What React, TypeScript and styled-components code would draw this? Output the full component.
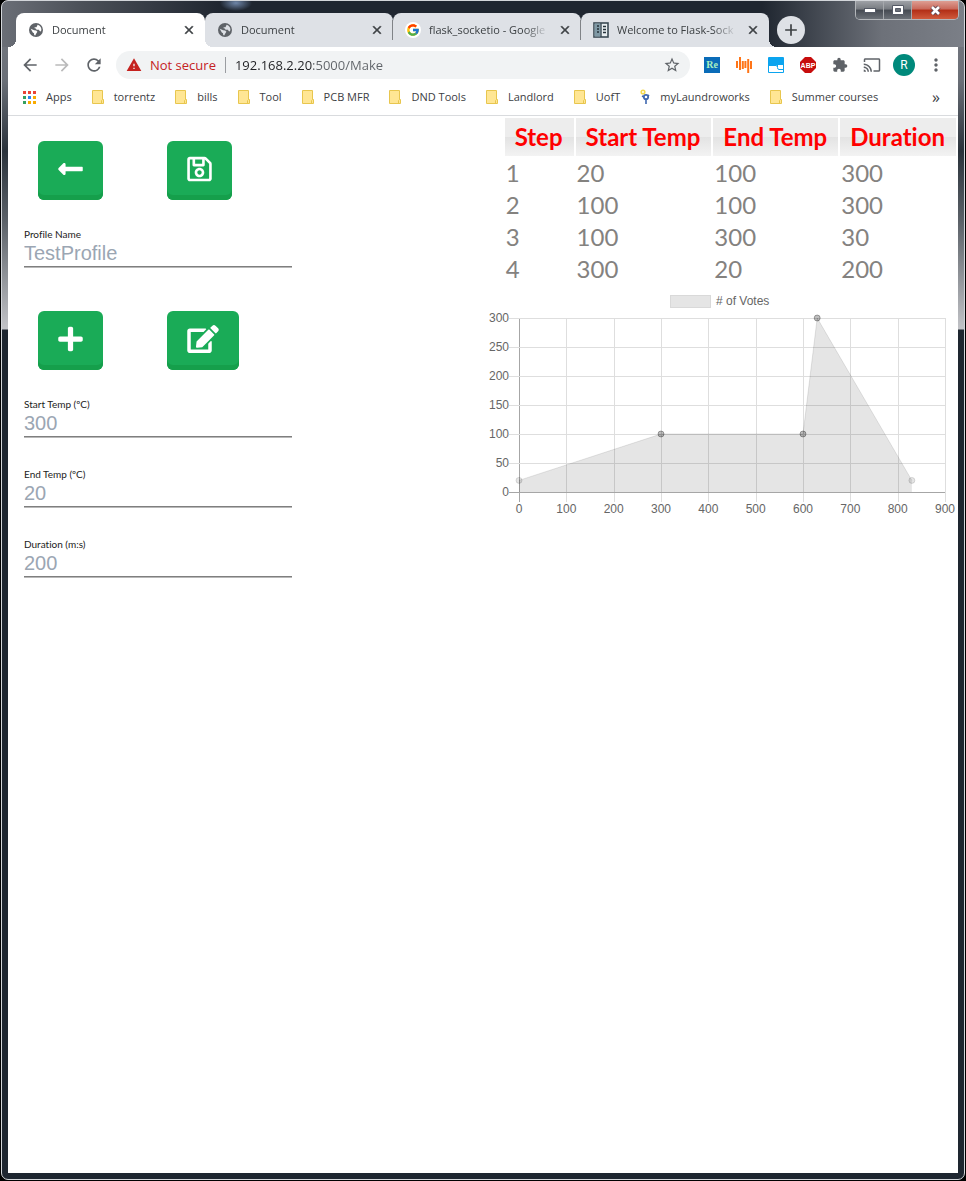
import React from 'react';
import styled, { createGlobalStyle, css } from 'styled-components';
import {
  MdArrowBack,
  MdArrowForward,
  MdCast,
  MdClose,
  MdExtension,
  MdMoreVert,
  MdRefresh,
  MdStarBorder,
  MdWarning,
  MdAdd,
} from 'react-icons/md';
import { FaEdit, FaLongArrowAltLeft, FaPlus, FaRegSave } from 'react-icons/fa';
import { FcGoogle } from 'react-icons/fc';

const uiFont = "'Open Sans', 'Noto Sans', sans-serif";

const GlobalStyle = createGlobalStyle`
  * { box-sizing: border-box; }
  body { margin: 0; background: #000; font-family: ${uiFont}; }
  button, input { font: inherit; }
  button { border: 0; padding: 0; background: none; color: inherit; cursor: pointer; }
`;

/* ---------- window frame ---------- */

const Frame = styled.div`
  position: relative;
  display: flex;
  flex-direction: column;
  min-height: calc(100vh - 1px);
  margin: 0 1px 1px;
  padding: 0 6px 6px;
  border: 1px solid #d3d6da;
  border-radius: 7px;
  background:
    radial-gradient(ellipse 16px 8px at 234px 2px, #6f86a8, transparent) 0 0 / 100% 46px no-repeat,
    linear-gradient(to right, #6a6e76 0, #4b5058 80px, #1f2630 220px, #1f2630 760px, #6d7179 880px, #7b7f87 100%) 0 0 / 100% 46px no-repeat,
    linear-gradient(#70747c 46px, #6a6f77 80px, #2a323b 150px, #5b6168 220px, #c2c3c7 328px, #1e2630 329px) 0 0 / 100% 100%;
`;

const TitleBar = styled.header`
  display: flex;
  align-items: flex-start;
  height: 46px;
  padding: 12px 0 0 8px;
`;

const flare = css`
  content: '';
  position: absolute;
  bottom: 0;
  width: 8px;
  height: 8px;
`;

const Tab = styled.div<{ $active?: boolean; $last?: boolean; $divider?: boolean }>`
  position: relative;
  display: flex;
  flex: 0 1 ${(p) => (p.$active ? 189 : 188)}px;
  align-items: center;
  gap: 8px;
  min-width: 0;
  height: 34px;
  padding: 0 8px 0 12px;
  border-radius: 8px 8px 0 0;
  background: ${(p) => (p.$active ? '#fff' : '#dee1e6')};
  color: #3c4043;
  font-size: 11px;
  line-height: 16px;
  z-index: ${(p) => (p.$active ? 1 : 0)};
  ${(p) =>
    p.$active &&
    css`
      &::before {
        ${flare}
        left: -8px;
        background: radial-gradient(circle at 0 0, transparent 8px, #fff 8px);
      }
    `}
  ${(p) =>
    (p.$active || p.$last) &&
    css`
      &::after {
        ${flare}
        right: -8px;
        background: radial-gradient(circle at 100% 0, transparent 8px, ${p.$active ? '#fff' : '#dee1e6'} 8px);
      }
    `}
  ${(p) =>
    p.$divider &&
    css`
      &::after {
        content: '';
        position: absolute;
        right: 0;
        top: 7px;
        width: 1px;
        height: 20px;
        background: #808387;
      }
    `}
`;

const TabIcon = styled.span<{ $round?: boolean }>`
  display: grid;
  place-items: center;
  flex: none;
  width: 16px;
  height: 16px;
  border-radius: 50%;
  background: ${(p) => (p.$round ? '#fff' : 'none')};
  color: #5f6368;
`;

const TabTitle = styled.span`
  flex: 1;
  min-width: 0;
  overflow: hidden;
  white-space: nowrap;
  mask-image: linear-gradient(to right, #000 calc(100% - 24px), transparent);
`;

const CloseTab = styled.button`
  display: grid;
  place-items: center;
  flex: none;
  width: 16px;
  height: 16px;
  font-size: 14px;
  color: #3c4043;
  path:last-child { stroke: currentColor; stroke-width: 1px; }
`;

const NewTab = styled.button`
  display: grid;
  place-items: center;
  flex: none;
  width: 28px;
  height: 28px;
  margin: 3px 0 0 8px;
  border-radius: 50%;
  background: #dee1e6;
  color: #3c4043;
  font-size: 20px;
`;

const WindowControls = styled.div`
  position: absolute;
  top: 0;
  right: 5px;
  display: flex;
  height: 19px;
  border: 1px solid #b3b6ba;
  border-top: 0;
  border-radius: 0 0 5px 5px;
  overflow: hidden;
`;

const WindowControl = styled.button<{ $danger?: boolean }>`
  display: grid;
  place-items: center;
  width: ${(p) => (p.$danger ? 46 : 28)}px;
  border-right: ${(p) => (p.$danger ? 0 : 1)}px solid #a5a8ac;
  background: ${(p) =>
    p.$danger
      ? 'linear-gradient(#dd9e93 0, #c9685a 45%, #b22e16 50%, #cf5a3c 100%)'
      : 'linear-gradient(#9ea1a6 0, #777b81 45%, #454a52 50%, #6b7077 100%)'};
`;

/* ---------- toolbar ---------- */

const Client = styled.div`
  display: flex;
  flex: 1;
  flex-direction: column;
  background: #fff;
`;

const Toolbar = styled.nav`
  display: flex;
  align-items: center;
  height: 36px;
  padding: 0 14px 0 12px;
`;

const NavButton = styled.button<{ $muted?: boolean }>`
  display: flex;
  margin-right: 12px;
  color: ${(p) => (p.$muted ? '#bababb' : '#5f6368')};
  font-size: 20px;
`;

const AddressBar = styled.div`
  display: flex;
  flex: 1;
  align-items: center;
  min-width: 0;
  height: 28px;
  padding: 0 9px 0 10px;
  border-radius: 14px;
  background: #f1f3f4;
`;

const Security = styled.button`
  display: flex;
  flex: none;
  align-items: center;
  gap: 8px;
  padding-right: 9px;
  color: #c5221f;
  font-size: 13px;
  line-height: 16px;
  svg { font-size: 16px; }
`;

const Address = styled.input`
  flex: 1;
  min-width: 0;
  height: 16px;
  padding: 0 0 0 9px;
  border: 0;
  border-left: 1px solid #9a9da1;
  outline: 0;
  background: linear-gradient(to right, #202124 86px, #5f6368 86px) text;
  -webkit-text-fill-color: transparent;
  font-size: 13px;
`;

const Star = styled.button`
  display: flex;
  color: #5f6368;
  font-size: 18px;
`;

const Extensions = styled.div`
  display: flex;
  align-items: center;
  gap: 16px;
  padding-left: 14px;
`;

const ExtensionButton = styled.button`
  display: flex;
  justify-content: center;
  width: 16px;
  color: #5f6368;
  font-size: 16px;
  svg { flex: none; }
`;

const Avatar = styled.button`
  width: 22px;
  height: 22px;
  margin: 0 -3px;
  border-radius: 50%;
  background: #00897b;
  color: #fff;
  font: 12px/22px Roboto, sans-serif;
`;

const Bookmarks = styled.nav`
  display: flex;
  align-items: center;
  gap: 20px;
  height: 33px;
  padding: 0 18px 4px 15px;
  border-bottom: 1px solid #d9dbde;
  overflow: hidden;
`;

const Bookmark = styled.a`
  display: flex;
  flex: none;
  align-items: center;
  gap: 10px;
  color: #3c4043;
  font-size: 11px;
  line-height: 16px;
  text-decoration: none;
  white-space: nowrap;
`;

const Overflow = styled.button`
  margin-left: auto;
  color: #3c4043;
  font-size: 16px;
  line-height: 16px;
`;

/* ---------- page ---------- */

const Page = styled.main`
  display: grid;
  grid-template-columns: 1fr 1fr;
  font-family: Lato, sans-serif;
  font-variant-ligatures: none;
`;

const Editor = styled.form`
  padding: 12px 16px 0;
`;

const ButtonRow = styled.div`
  display: flex;
  gap: 64px;
  padding: 13px 14px 28px;
`;

const ActionButton = styled.button<{ $wide?: boolean }>`
  display: flex;
  align-items: center;
  height: 59px;
  padding: 0 20px 4px;
  border-radius: 6px;
  background: #1aab57;
  box-shadow: inset 0 -5px #159f4b;
  color: #fff;
  svg { width: ${(p) => (p.$wide ? 32 : 25)}px; height: 28px; }
`;

const Field = styled.label`
  display: block;
  width: 268px;
  max-width: 100%;
  margin-bottom: 31px;
  color: #222;
  font-size: 10px;
  line-height: 12px;
`;

const FieldInput = styled.input`
  display: block;
  width: 100%;
  height: 27px;
  padding: 0;
  border: 0;
  border-bottom: 1px solid #7f7f7f;
  box-shadow: 0 1px #b8b8b8;
  outline: 0;
  background: none;
  color: #9ba6b3;
  font: 20px/24px 'Liberation Sans', sans-serif;
`;

const Steps = styled.table`
  margin: 0 0 1px auto;
  border-spacing: 2px;
  color: #84827f;
  font-size: 24px;
  line-height: 28px;
  text-align: left;
`;

const HeadCell = styled.th`
  height: 38px;
  padding: 0 11px 0 10px;
  background: linear-gradient(#ededed 50%, #e3e3e3 50%, #f3f3f3);
  color: #f00;
  white-space: nowrap;
`;

const Cell = styled.td`
  height: 30px;
  padding: 1px;
`;

const Chart = styled.svg`
  display: block;
  width: 100%;
  font: 12px 'Liberation Sans', sans-serif;
  fill: #666;
`;

const columns = ['Step', 'Start Temp', 'End Temp', 'Duration'];
const steps = [
  [1, 20, 100, 300],
  [2, 100, 100, 300],
  [3, 100, 300, 30],
  [4, 300, 20, 200],
];
const profile = [
  [0, 20],
  [300, 100],
  [600, 100],
  [630, 300],
  [830, 20],
];
const xTicks = [0, 100, 200, 300, 400, 500, 600, 700, 800, 900];
const yTicks = [0, 50, 100, 150, 200, 250, 300];
const px = (v: number) => 36 + (v * 426) / 900;
const py = (v: number) => 205 - (v * 174) / 300;
const crisp = (v: number) => Math.round(v) + 0.5;

function ProfileChart() {
  const line = profile.map(([x, y]) => `${px(x)},${py(y)}`).join(' ');
  return (
    <Chart viewBox="0 0 475 237" role="img" aria-label="Temperature profile">
      <rect x="187.5" y="8.5" width="40" height="12" fill="#e5e5e5" stroke="#d9d9d9" />
      <text x="233" y="18">
        # of Votes
      </text>
      {xTicks.map((t) => (
        <g key={t}>
          <path d={`M${crisp(px(t))} 31V215`} stroke={t === 0 ? '#a6a6a6' : '#dedede'} />
          <text x={px(t)} y="226" textAnchor="middle">
            {t}
          </text>
        </g>
      ))}
      {yTicks.map((t) => (
        <g key={t}>
          <path d={`M26 ${crisp(py(t))}H462`} stroke={t === 0 ? '#a6a6a6' : '#dedede'} />
          <text x="26" y={Math.round(py(t)) + 4} textAnchor="end">
            {t}
          </text>
        </g>
      ))}
      <polygon points={`${line} ${px(830)},${py(0)} ${px(0)},${py(0)}`} fill="rgba(0,0,0,.1)" />
      <polyline points={line} fill="none" stroke="rgba(0,0,0,.1)" />
      {profile.map(([x, y]) => (
        <circle
          key={x}
          cx={px(x)}
          cy={py(y)}
          r="3"
          fill={y === 20 ? 'rgba(0,0,0,.1)' : 'rgba(0,0,0,.25)'}
          stroke={y === 20 ? 'rgba(0,0,0,.12)' : 'rgba(0,0,0,.3)'}
        />
      ))}
    </Chart>
  );
}

const GlobeIcon = () => (
  <svg width="14" height="14" viewBox="0 0 14 14" fill="currentColor" fillRule="evenodd" aria-hidden="true">
    <path d="M7 0a7 7 0 1 0 0 14A7 7 0 0 0 7 0zM8.600 1.800A5.400 5.400 0 0 1 12.400 7l-.6 1.400-1.200-.4-.6-1.200H7.600L6.800 5.600 5.600 5.200V4.200h1.800l.6-1zM1.700 5.800l3.500 1.400 2 .2 1.200 1.400-1 1.400-1.200 2.200-1-.3-.2-1.900-1.200-.8z" />
  </svg>
);

const FolderIcon = () => (
  <svg width="12" height="14" viewBox="0 0 12 14" aria-hidden="true">
    <path d="M.5.5h10v9h1v4h-11z" fill="#ffe694" stroke="#e8c64e" />
    <path d="M9.5 13.5v-3l1-1" fill="none" stroke="#e8c64e" />
  </svg>
);

const gridColors = ['#ea4335', '#ea4335', '#ea4335', '#34a060', '#2a84f0', '#f9ab00', '#34a060', '#f9ab00', '#f9ab00'];
const AppsIcon = () => (
  <svg width="13" height="13" viewBox="0 0 13 13" aria-hidden="true">
    {gridColors.map((c, i) => (
      <rect key={i} x={(i % 3) * 5} y={Math.floor(i / 3) * 5} width="3" height="3" fill={c} />
    ))}
  </svg>
);

const LaundroIcon = () => (
  <svg width="10" height="16" viewBox="0 0 10 16" fill="none" aria-hidden="true">
    <circle cx="3" cy="3" r="1.8" stroke="#f4d94e" strokeWidth="1.6" />
    <circle cx="6" cy="8" r="2.2" stroke="#3f68b0" strokeWidth="1.8" />
    <path d="M6 10v5M2 7l2 1M8 7l1-1" stroke="#3f68b0" strokeWidth="1.6" />
  </svg>
);

const BookIcon = () => (
  <svg width="16" height="16" viewBox="0 0 16 16" aria-hidden="true">
    <rect x="1" y="1" width="14" height="14" fill="#e8eef0" stroke="#3b4a54" strokeWidth="1.6" />
    <path d="M1.500 1.500h6v13h-6z" fill="#7f99a5" />
    <path d="M8 1v14" stroke="#3b4a54" strokeWidth="1.4" />
    <path d="M4 4h2M4 7h2M4 10h2M10 4.500h3M10 7.500h3M10 10.500h3" stroke="#26323a" strokeWidth="1.4" />
  </svg>
);

const ReIcon = () => (
  <svg width="16" height="16" viewBox="0 0 16 16" aria-hidden="true">
    <path d="M0 0h16v16H0z" fill="#0a6cb8" />
    <text x="8" y="11" textAnchor="middle" fill="#a8f0c0" fontFamily="Liberation Serif, serif" fontWeight="700" fontSize="10">
      Re
    </text>
  </svg>
);

const WaveIcon = () => (
  <svg width="16" height="16" viewBox="0 0 16 16" stroke="#ff7518" strokeWidth="2" aria-hidden="true">
    <path d="M1 4v7M4 0v13M6.800 4v8M9.400 4v7M12.200 2v14M15 4v8" />
  </svg>
);

const PanelIcon = () => (
  <svg width="16" height="16" viewBox="0 0 16 16" aria-hidden="true">
    <rect width="16" height="16" rx="1" fill="#0ba4ef" />
    <path d="M1 8h14v7H1z" fill="#fff" />
    <path d="M1 8.500h7q1.500 0 1.500 2t1.500 2h4.500M9.500 8v2" fill="none" stroke="#0ba4ef" />
  </svg>
);

const AbpIcon = () => (
  <svg width="16" height="16" viewBox="0 0 16 16" aria-hidden="true">
    <path d="M5 0h6l5 5v6l-5 5H5l-5-5V5z" fill="#c70d0d" />
    <text x="8" y="11" textAnchor="middle" fill="#fff" fontFamily="Liberation Sans, sans-serif" fontWeight="700" fontSize="7">
      ABP
    </text>
  </svg>
);

const tabs = [
  { title: 'Document', icon: <GlobeIcon />, active: true },
  { title: 'Document', icon: <GlobeIcon /> },
  { title: 'flask_socketio - Google', icon: <FcGoogle size={14} />, round: true },
  { title: 'Welcome to Flask-Sock', icon: <BookIcon /> },
];

const bookmarks = [
  { label: 'Apps', icon: <AppsIcon /> },
  { label: 'torrentz' },
  { label: 'bills' },
  { label: 'Tool' },
  { label: 'PCB MFR' },
  { label: 'DND Tools' },
  { label: 'Landlord' },
  { label: 'UofT' },
  { label: 'myLaundroworks', icon: <LaundroIcon /> },
  { label: 'Summer courses' },
];

const temperatureFields = [
  { label: 'Start Temp (ºC)', value: '300' },
  { label: 'End Temp (ºC)', value: '20' },
  { label: 'Duration (m:s)', value: '200' },
];

export default function App() {
  return (
    <>
      <GlobalStyle />
      <Frame>
        <TitleBar>
          {tabs.map((tab, i) => (
            <Tab key={i} $active={tab.active} $last={i === tabs.length - 1} $divider={i === 1 || i === 2}>
              <TabIcon $round={tab.round}>{tab.icon}</TabIcon>
              <TabTitle>{tab.title}</TabTitle>
              <CloseTab aria-label="Close tab">
                <MdClose />
              </CloseTab>
            </Tab>
          ))}
          <NewTab aria-label="New tab">
            <MdAdd />
          </NewTab>
          <WindowControls>
            <WindowControl aria-label="Minimize">
              <svg width="12" height="6" viewBox="0 0 12 6">
                <rect x=".5" y="1.500" width="11" height="4" fill="#fff" stroke="#555a66" />
              </svg>
            </WindowControl>
            <WindowControl aria-label="Maximize">
              <svg width="12" height="10" viewBox="0 0 12 10">
                <path d="M.5.5h11v9H.5z" fill="#fff" stroke="#555a66" />
                <path d="M3.500 3.500h5v3h-5z" fill="#6a6f78" stroke="#555a66" />
              </svg>
            </WindowControl>
            <WindowControl aria-label="Close" $danger>
              <svg width="13" height="11" viewBox="0 0 13 11">
                <path d="M3 2l7 7M10 2L3 9" stroke="#5c4450" strokeWidth="4.500" />
                <path d="M3 2l7 7M10 2L3 9" stroke="#fff" strokeWidth="2.600" />
              </svg>
            </WindowControl>
          </WindowControls>
        </TitleBar>

        <Client>
          <Toolbar>
            <NavButton aria-label="Back">
              <MdArrowBack />
            </NavButton>
            <NavButton aria-label="Forward" $muted>
              <MdArrowForward />
            </NavButton>
            <NavButton aria-label="Reload">
              <MdRefresh />
            </NavButton>
            <AddressBar>
              <Security>
                <MdWarning />
                Not secure
              </Security>
              <Address aria-label="Address" defaultValue="192.168.2.20:5000/Make" />
              <Star aria-label="Bookmark this page">
                <MdStarBorder />
              </Star>
            </AddressBar>
            <Extensions>
              <ExtensionButton aria-label="Re"><ReIcon /></ExtensionButton>
              <ExtensionButton aria-label="Audio"><WaveIcon /></ExtensionButton>
              <ExtensionButton aria-label="Panel"><PanelIcon /></ExtensionButton>
              <ExtensionButton aria-label="Ad blocker"><AbpIcon /></ExtensionButton>
              <ExtensionButton aria-label="Extensions"><MdExtension /></ExtensionButton>
              <ExtensionButton aria-label="Cast"><MdCast size={18} /></ExtensionButton>
              <Avatar aria-label="Profile">R</Avatar>
              <ExtensionButton aria-label="Menu"><MdMoreVert size={20} /></ExtensionButton>
            </Extensions>
          </Toolbar>
          <Bookmarks>
            {bookmarks.map((b) => (
              <Bookmark href="#" key={b.label}>
                {b.icon ?? <FolderIcon />}
                {b.label}
              </Bookmark>
            ))}
            <Overflow aria-label="More bookmarks">»</Overflow>
          </Bookmarks>

          <Page>
            <Editor onSubmit={(e) => e.preventDefault()}>
              <ButtonRow>
                <ActionButton type="button" aria-label="Back">
                  <FaLongArrowAltLeft />
                </ActionButton>
                <ActionButton type="button" aria-label="Save">
                  <FaRegSave />
                </ActionButton>
              </ButtonRow>
              <Field>
                Profile Name
                <FieldInput defaultValue="TestProfile" />
              </Field>
              <ButtonRow>
                <ActionButton type="button" aria-label="Add step">
                  <FaPlus />
                </ActionButton>
                <ActionButton type="button" aria-label="Edit step" $wide>
                  <FaEdit />
                </ActionButton>
              </ButtonRow>
              {temperatureFields.map((f) => (
                <Field key={f.label}>
                  {f.label}
                  <FieldInput defaultValue={f.value} />
                </Field>
              ))}
            </Editor>
            <section>
              <Steps>
                <thead>
                  <tr>
                    {columns.map((c) => (
                      <HeadCell key={c}>{c}</HeadCell>
                    ))}
                  </tr>
                </thead>
                <tbody>
                  {steps.map((row) => (
                    <tr key={row[0]}>
                      {row.map((v, i) => (
                        <Cell key={i}>{v}</Cell>
                      ))}
                    </tr>
                  ))}
                </tbody>
              </Steps>
              <ProfileChart />
            </section>
          </Page>
        </Client>
      </Frame>
    </>
  );
}
